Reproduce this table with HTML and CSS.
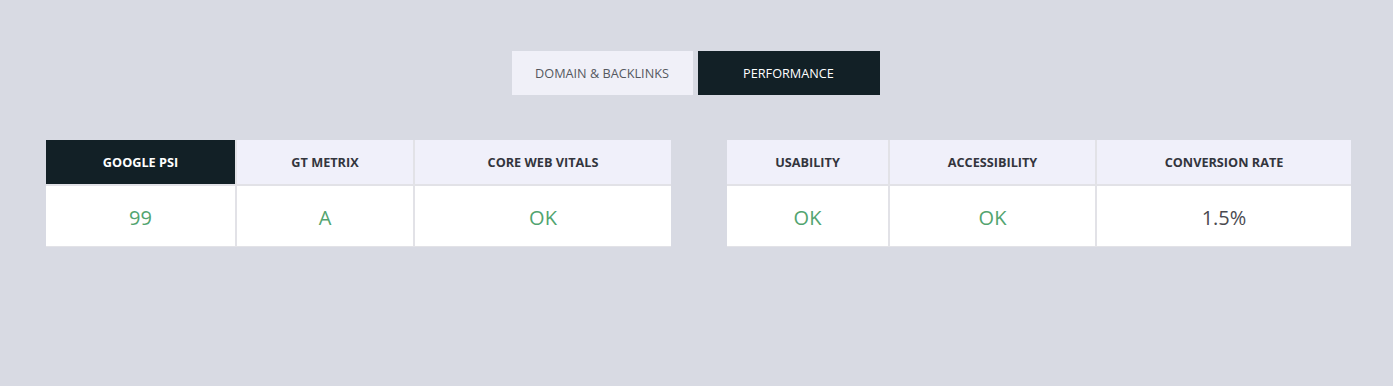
FILE: index.html
```html
<!DOCTYPE html>
<html>
<head>
    <title>Performance</title>
    <link rel="stylesheet" href="styles.css">
</head>
<body>
    <div class="tabs">
        <div class="tab">DOMAIN &amp; BACKLINKS</div>
        <div class="tab active">PERFORMANCE</div>
    </div>

    <div class="tables">
        <div class="metrics metrics-left">
            <div class="head dark">GOOGLE PSI</div>
            <div class="head">GT METRIX</div>
            <div class="head">CORE WEB VITALS</div>
            <div class="cell good">99</div>
            <div class="cell good">A</div>
            <div class="cell good">OK</div>
        </div>
        <div class="metrics metrics-right">
            <div class="head">USABILITY</div>
            <div class="head">ACCESSIBILITY</div>
            <div class="head">CONVERSION RATE</div>
            <div class="cell good">OK</div>
            <div class="cell good">OK</div>
            <div class="cell">1.5%</div>
        </div>
    </div>
</body>
</html>
```

FILE: styles.css
```css
body {
    margin: 0;
    padding: 51px 42px 0 46px;
    background: #d8dae3;
    font-family: "Open Sans", "Liberation Sans", sans-serif;
}
.tabs {
    display: flex;
    justify-content: center;
    gap: 5px;
    margin-left: -6px;
}
.tab {
    width: 181px;
    height: 44px;
    display: flex;
    align-items: center;
    justify-content: center;
    background: #f0f0f8;
    color: #555860;
    font-size: 12.7px;
}
.tab.active {
    width: 182px;
    background: #122026;
    color: white;
}
.tables {
    display: flex;
    justify-content: space-between;
    margin-top: 45px;
}
.metrics {
    display: grid;
    grid-template-rows: 44px 60px;
    gap: 2px;
    background: #e2e2e7;
    border-bottom: 1px solid #e2e2e7;
}
.metrics-left {
    grid-template-columns: 189px 176px 256px;
}
.metrics-right {
    grid-template-columns: 161px 205px 254px;
}
.head {
    display: flex;
    align-items: center;
    justify-content: center;
    background: #f0f0fa;
    color: #33353d;
    font-size: 12.7px;
    font-weight: bold;
}
.head.dark {
    background: #122026;
    color: white;
}
.cell {
    display: flex;
    align-items: center;
    justify-content: center;
    background: white;
    color: #4a4a50;
    font-size: 20px;
    padding-top: 2px;
}
.cell.good {
    color: #52a46f;
}
```
